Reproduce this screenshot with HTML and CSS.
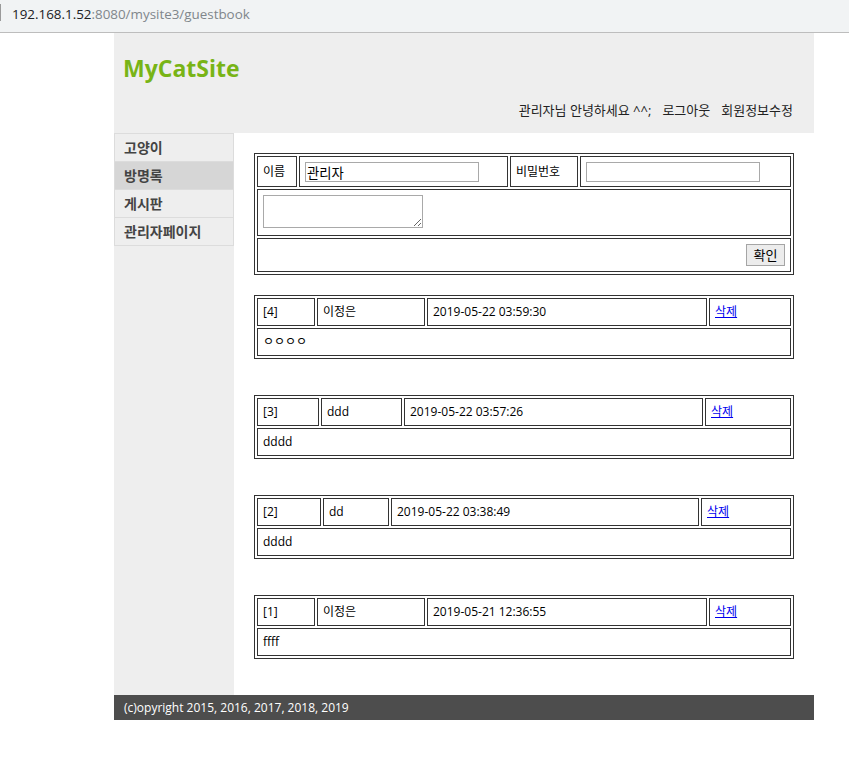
FILE: index.html
```html
<!DOCTYPE html>
<html lang="ko">
<head>
<meta charset="utf-8">
<title>mysite3 guestbook</title>
<link rel="stylesheet" href="styles.css">
</head>
<body>
<div class="addr"><span class="addr-caret"></span><span class="addr-host">192.168.1.52</span><span class="addr-path">:8080/mysite3/guestbook</span></div>
<div class="page">
  <div class="container">
    <div class="header">
      <h1 class="logo">MyCatSite</h1>
      <ul class="topnav">
        <li>관리자님 안녕하세요 ^^;</li>
        <li><a href="#">로그아웃</a></li>
        <li><a href="#">회원정보수정</a></li>
      </ul>
    </div>
    <div class="wrap">
      <ul class="side">
        <li>고양이</li>
        <li class="on">방명록</li>
        <li>게시판</li>
        <li>관리자페이지</li>
      </ul>
      <div class="content">
        <form class="gb-form">
          <table class="gb gb-write">
            <tr class="r1">
              <td class="w1">이름</td>
              <td class="w2"><input class="in" type="text" value="관리자"></td>
              <td class="w3">비밀번호</td>
              <td class="w4"><input class="in" type="password"></td>
            </tr>
            <tr class="r2"><td colspan="4"><textarea class="ta"></textarea></td></tr>
            <tr class="r3"><td colspan="4"><button class="btn" type="button">확인</button></td></tr>
          </table>
        </form>

        <table class="gb gb-item v1">
          <tr><td>[4]</td><td>이정은</td><td>2019-05-22 03:59:30</td><td><a href="#">삭제</a></td></tr>
          <tr><td colspan="4">ㅇㅇㅇㅇ</td></tr>
        </table>

        <table class="gb gb-item v2">
          <tr><td>[3]</td><td>ddd</td><td>2019-05-22 03:57:26</td><td><a href="#">삭제</a></td></tr>
          <tr><td colspan="4">dddd</td></tr>
        </table>

        <table class="gb gb-item v3">
          <tr><td>[2]</td><td>dd</td><td>2019-05-22 03:38:49</td><td><a href="#">삭제</a></td></tr>
          <tr><td colspan="4">dddd</td></tr>
        </table>

        <table class="gb gb-item v1">
          <tr><td>[1]</td><td>이정은</td><td>2019-05-21 12:36:55</td><td><a href="#">삭제</a></td></tr>
          <tr><td colspan="4">ffff</td></tr>
        </table>
      </div>
    </div>
    <div class="footer">(c)opyright 2015, 2016, 2017, 2018, 2019</div>
  </div>
</div>
</body>
</html>
```

FILE: styles.css
```css
* { box-sizing: border-box; }

body {
  margin: 0;
  background: #fff;
  color: #000;
  font-family: "Open Sans", "Noto Sans CJK KR", sans-serif;
}

/* address bar */
.addr {
  display: flex;
  align-items: flex-start;
  height: 33px;
  background: #f1f3f4;
  border-bottom: 1px solid #bdbdbd;
  font-size: 13.4px;
  line-height: 28px;
}
.addr-caret {
  width: 1px;
  height: 17px;
  margin-top: 4px;
  margin-right: 11px;
  background: #9a9a9a;
}
.addr-host { color: #202124; }
.addr-path { color: #80868b; }

/* page */
.page { padding-left: 114px; }
.container { width: 700px; }

.header {
  height: 100px;
  background: #eee;
  padding: 20px 21px 0 9px;
}
.logo {
  margin: 0;
  font-size: 23px;
  line-height: 30px;
  font-weight: 700;
  color: #78b416;
}
.topnav {
  list-style: none;
  margin: 19px 0 0;
  padding: 0;
  display: flex;
  justify-content: flex-end;
  gap: 11px;
  font-size: 13px;
  line-height: 16px;
  color: #222;
}
.topnav a { color: #222; text-decoration: none; }

.wrap { display: flex; }

.side {
  width: 120px;
  flex: none;
  margin: 0;
  padding: 0;
  list-style: none;
  background: #eee;
}
.side li {
  height: 28px;
  border: 1px solid #dcdcdc;
  border-top: 0;
  padding-left: 9px;
  font-size: 14px;
  font-weight: 700;
  line-height: 27px;
  color: #444;
}
.side li:first-child {
  height: 29px;
  border-top: 1px solid #dcdcdc;
}
.side li.on { background: #d6d6d6; }

.content {
  width: 580px;
  padding: 20px 20px 0;
}

.gb-form { margin: 0; }

.gb {
  width: 540px;
  table-layout: fixed;
  border-collapse: separate;
  border-spacing: 2px;
  border: 1px solid #333;
  font-size: 12px;
  line-height: 16px;
}
.gb td {
  border: 1px solid #333;
  padding: 5px;
  vertical-align: middle;
  white-space: nowrap;
  overflow: hidden;
}
.gb a { color: #0000ee; text-decoration: underline; }

.gb-write { margin-bottom: 20px; }
.gb-write .w1 { width: 40px; }
.gb-write .w2 { width: 209px; }
.gb-write .w3 { width: 68px; }
.gb-write .w4 { width: 211px; }
.gb-write .r1 td { height: 31px; padding-bottom: 4px; }
.gb-write .r2 td { height: 47px; vertical-align: top; }
.gb-write .r3 td { height: 34px; }

.in {
  display: block;
  width: 174px;
  height: 20px;
  margin: 0;
  padding: 1px 1px;
  border: 1px solid #a9a9a9;
  font-family: inherit;
  font-size: 13.33px;
  line-height: 16px;
  color: #000;
}
.ta {
  display: block;
  width: 160px;
  height: 33px;
  margin: 0;
  border: 1px solid #a9a9a9;
  font-family: inherit;
  font-size: 13px;
}
.btn {
  display: block;
  width: 39px;
  height: 22px;
  margin: 0 0 0 auto;
  padding: 0;
  border: 1px solid #a5a5a5;
  border-radius: 0;
  background: #ececec;
  font-family: inherit;
  font-size: 13px;
  font-weight: 400;
  line-height: 20px;
  color: #000;
}

.gb-item { margin-bottom: 36px; }
.gb-item td { height: 28px; }

.v1 tr:first-child td:nth-child(1) { width: 58px; }
.v1 tr:first-child td:nth-child(2) { width: 108px; }
.v1 tr:first-child td:nth-child(3) { width: 280px; }
.v1 tr:first-child td:nth-child(4) { width: 82px; }

.v2 tr:first-child td:nth-child(1) { width: 62px; }
.v2 tr:first-child td:nth-child(2) { width: 81px; }
.v2 tr:first-child td:nth-child(3) { width: 299px; }
.v2 tr:first-child td:nth-child(4) { width: 86px; }

.v3 tr:first-child td:nth-child(1) { width: 64px; }
.v3 tr:first-child td:nth-child(2) { width: 66px; }
.v3 tr:first-child td:nth-child(3) { width: 308px; }
.v3 tr:first-child td:nth-child(4) { width: 90px; }

.footer {
  height: 25px;
  padding-left: 10px;
  background: #4d4d4d;
  color: #fff;
  font-size: 12px;
  line-height: 25px;
}
```
